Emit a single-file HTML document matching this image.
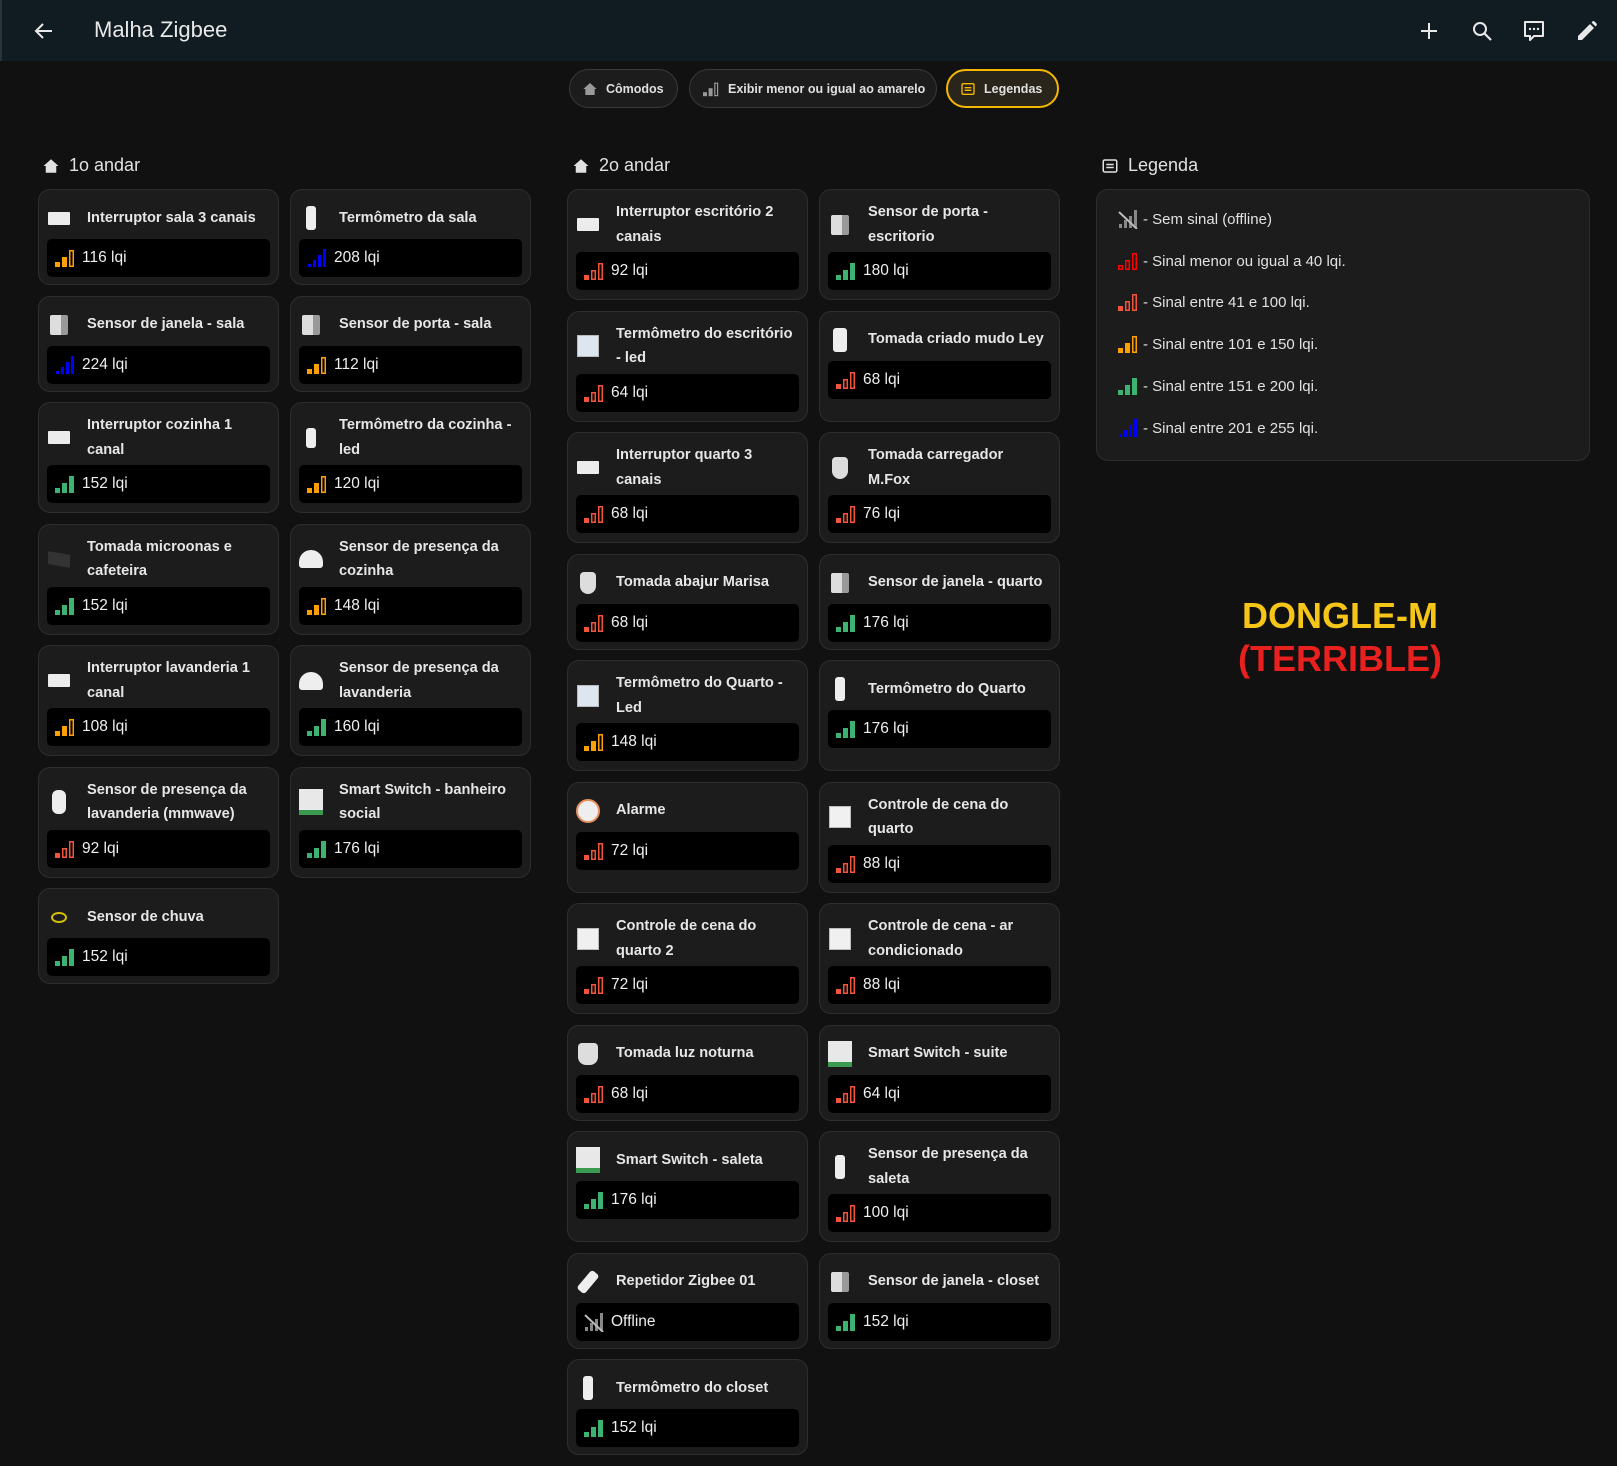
<!DOCTYPE html>
<html><head><meta charset="utf-8"><style>
*{box-sizing:border-box;margin:0;padding:0}
body{width:1617px;height:1466px;background:#111111;font-family:"Liberation Sans",sans-serif;color:#e1e1e1;position:relative;overflow:hidden}
.top{position:absolute;left:0;top:0;width:1617px;height:61px;background:#111c22;border-left:2px solid #2a3238}
.top .t{position:absolute;left:92px;top:17px;font-size:22px;color:#e8e8e8}
.hi{position:absolute;top:19px}
.chip{position:absolute;top:69px;height:39px;border:1px solid #3a3a3a;border-radius:20px;background:#1c1c1c;font-size:12.5px;font-weight:bold;color:#e0e0e0;display:flex;align-items:center;padding-left:12px}
.chip svg{margin-right:8px}
.sec{position:absolute;top:155px;font-size:18px;color:#e1e1e1;display:flex;align-items:center}
.sec svg{margin-right:9px}
.col{position:absolute;top:189px;display:grid;grid-template-columns:241px 241px;column-gap:11px;row-gap:10.5px}
.c{background:#1c1c1c;border:1px solid #2e2e2e;border-radius:12px;padding:7px 8px 8px 8px;height:96px}
.h{display:flex;align-items:center;min-height:42px;padding:3px 0}
.h .n{font-weight:bold;font-size:14.6px;line-height:24.5px;color:#e6e6e6;margin-left:16px;padding-right:3px}
.ic{width:24px;height:24px;flex:none;display:flex;align-items:center;justify-content:center}
.b{background:#000;border-radius:5px;height:38px;display:flex;align-items:center;padding-left:7px;font-size:15.5px;color:#f0f0f0}
.b svg{margin-right:6px}
.sw{width:22px;height:13px;background:#ececec;border-radius:1px}
.th{width:10px;height:24px;background:#eee;border-radius:3px}
.dr{width:18px;height:20px;background:linear-gradient(90deg,#ddd 60%,#999 60%);border-radius:2px}
.pr{width:24px;height:18px;background:#eee;border-radius:12px 12px 3px 3px}
.sq{width:22px;height:22px;background:#f0f0f0;border:1px solid #bbb}
.ss{width:26px;height:26px;background:#e8e8e8;border-bottom:5px solid #3a9a50}
.pl{width:20px;height:22px;background:#ddd;border-radius:4px 4px 8px 8px}
.lg{position:absolute;left:1096px;top:189px;width:494px;height:272px;background:#1c1c1c;border:1px solid #2e2e2e;border-radius:12px}
.lr{position:absolute;left:20px;display:flex;align-items:center;font-size:15px;color:#e1e1e1}
.lr svg{margin-right:4px}
.dg{position:absolute;left:1140px;width:400px;text-align:center;font-weight:bold;font-size:36px;line-height:42px}
</style></head><body>
<svg width="0" height="0" style="position:absolute">
<defs>
<symbol id="gr" viewBox="0 0 22 20"><rect x="1" y="14" width="5" height="5" fill="#3cb371"/><rect x="8" y="9" width="5" height="10" fill="#3cb371"/><rect x="15" y="2" width="5" height="17" fill="#3cb371"/></symbol>
<symbol id="or" viewBox="0 0 22 20"><rect x="1" y="14" width="5" height="5" fill="#ffa000"/><rect x="8" y="9" width="5" height="10" fill="#ffa000"/><rect x="15.75" y="2.75" width="3.5" height="15.5" fill="none" stroke="#ffa000" stroke-width="1.5"/></symbol>
<symbol id="gy" viewBox="0 0 22 20"><rect x="1" y="14" width="5" height="5" fill="#999"/><rect x="8" y="9" width="5" height="10" fill="#999"/><rect x="15.75" y="2.75" width="3.5" height="15.5" fill="none" stroke="#999" stroke-width="1.5"/></symbol>
<symbol id="to" viewBox="0 0 22 20"><rect x="1" y="14" width="5" height="5" fill="#f4553a"/><rect x="8.75" y="9.75" width="3.5" height="8.5" fill="none" stroke="#f4553a" stroke-width="1.5"/><rect x="15.75" y="2.75" width="3.5" height="15.5" fill="none" stroke="#f4553a" stroke-width="1.5"/></symbol>
<symbol id="re" viewBox="0 0 22 20"><rect x="1.75" y="14.75" width="3.5" height="3.5" fill="none" stroke="#f00" stroke-width="1.5"/><rect x="8.75" y="9.75" width="3.5" height="8.5" fill="none" stroke="#f00" stroke-width="1.5"/><rect x="15.75" y="2.75" width="3.5" height="15.5" fill="none" stroke="#f00" stroke-width="1.5"/></symbol>
<symbol id="bl" viewBox="0 0 22 20"><rect x="2" y="16" width="3" height="3" fill="#0000ff"/><rect x="7" y="12" width="3" height="7" fill="#0000ff"/><rect x="12" y="7" width="3" height="12" fill="#0000ff"/><rect x="17" y="1" width="3" height="18" fill="#0000ff"/></symbol>
<symbol id="of" viewBox="0 0 22 20"><rect x="2" y="15" width="3" height="4" fill="#888"/><rect x="7" y="11" width="3" height="8" fill="#888"/><rect x="12" y="7" width="3" height="12" fill="#888"/><rect x="17" y="1" width="3" height="18" fill="#888"/><path d="M2 3 L20 20" stroke="#bbb" stroke-width="2"/></symbol>
</defs></svg>

<div class="top"><div class="t">Malha Zigbee</div>
<svg class="hi" style="left:30px" width="24" height="24" viewBox="0 0 24 24"><path d="M20 12H5M11 5l-7 7 7 7" stroke="#e8e8e8" stroke-width="2" fill="none"/></svg>
<svg class="hi" style="left:1415px" width="24" height="24" viewBox="0 0 24 24"><path d="M12 4v16M4 12h16" stroke="#e8e8e8" stroke-width="2"/></svg>
<svg class="hi" style="left:1468px" width="24" height="24" viewBox="0 0 24 24"><circle cx="10" cy="10" r="6" stroke="#e8e8e8" stroke-width="2" fill="none"/><path d="M14.5 14.5L21 21" stroke="#e8e8e8" stroke-width="2.2"/></svg>
<svg class="hi" style="left:1520px" width="24" height="24" viewBox="0 0 24 24"><path d="M3 3h18v14h-9l-4 4v-4H3z" stroke="#e8e8e8" stroke-width="2" fill="none" stroke-linejoin="round"/><circle cx="8" cy="10" r="1.2" fill="#e8e8e8"/><circle cx="12" cy="10" r="1.2" fill="#e8e8e8"/><circle cx="16" cy="10" r="1.2" fill="#e8e8e8"/></svg>
<svg class="hi" style="left:1573px" width="24" height="24" viewBox="0 0 24 24"><path d="M3 21v-4L15 5l4 4L7 21z" fill="#e8e8e8"/><path d="M16.5 3.5l4 4 1-1a1.5 1.5 0 000-2l-2-2a1.5 1.5 0 00-2 0z" fill="#e8e8e8"/></svg>
</div>

<div class="chip" style="left:569px;width:109px"><svg width="16" height="16" viewBox="0 0 24 24"><path d="M12 3L2 12h3v9h14v-9h3z" fill="#999"/></svg>Cômodos</div>
<div class="chip" style="left:689px;width:248px"><svg width="18" height="16" viewBox="0 0 22 20"><use href="#gy"/></svg>Exibir menor ou igual ao amarelo</div>
<div class="chip" style="left:946px;width:113px;border:2px solid #f5b800;background:#29251b"><svg width="16" height="16" viewBox="0 0 24 24"><rect x="3" y="4" width="18" height="16" rx="2" stroke="#f5b800" stroke-width="2" fill="none"/><path d="M7 10h10M7 14h10" stroke="#f5b800" stroke-width="2"/></svg>Legendas</div>

<div class="sec" style="left:42px"><svg width="18" height="18" viewBox="0 0 24 24"><path d="M12 3L2 12h3v9h14v-9h3z" fill="#e1e1e1"/></svg>1o andar</div>
<div class="sec" style="left:572px"><svg width="18" height="18" viewBox="0 0 24 24"><path d="M12 3L2 12h3v9h14v-9h3z" fill="#e1e1e1"/></svg>2o andar</div>
<div class="sec" style="left:1101px"><svg width="18" height="18" viewBox="0 0 24 24"><rect x="3" y="4" width="18" height="16" rx="2" stroke="#e1e1e1" stroke-width="2" fill="none"/><path d="M7 10h10M7 14h10" stroke="#e1e1e1" stroke-width="2"/></svg>Legenda</div>

<div class="col" style="left:38px;grid-template-rows:96px 96px 111px 111px 111px 111px 96px">
<div class="c"><div class="h"><div class="ic"><div class="sw"></div></div><div class="n">Interruptor sala 3 canais</div></div><div class="b"><svg width="22" height="20"><use href="#or"/></svg>116 lqi</div></div>
<div class="c"><div class="h"><div class="ic"><div class="th"></div></div><div class="n">Termômetro da sala</div></div><div class="b"><svg width="22" height="20"><use href="#bl"/></svg>208 lqi</div></div>
<div class="c"><div class="h"><div class="ic"><div class="dr"></div></div><div class="n">Sensor de janela - sala</div></div><div class="b"><svg width="22" height="20"><use href="#bl"/></svg>224 lqi</div></div>
<div class="c"><div class="h"><div class="ic"><div class="dr"></div></div><div class="n">Sensor de porta - sala</div></div><div class="b"><svg width="22" height="20"><use href="#or"/></svg>112 lqi</div></div>
<div class="c" style="height:111px"><div class="h"><div class="ic"><div class="sw"></div></div><div class="n">Interruptor cozinha 1 canal</div></div><div class="b"><svg width="22" height="20"><use href="#gr"/></svg>152 lqi</div></div>
<div class="c" style="height:111px"><div class="h"><div class="ic"><div class="th" style="height:20px"></div></div><div class="n">Termômetro da cozinha - led</div></div><div class="b"><svg width="22" height="20"><use href="#or"/></svg>120 lqi</div></div>
<div class="c" style="height:111px"><div class="h"><div class="ic"><div class="sw" style="background:#333;transform:skewY(10deg)"></div></div><div class="n">Tomada microonas e cafeteira</div></div><div class="b"><svg width="22" height="20"><use href="#gr"/></svg>152 lqi</div></div>
<div class="c" style="height:111px"><div class="h"><div class="ic"><div class="pr"></div></div><div class="n">Sensor de presença da cozinha</div></div><div class="b"><svg width="22" height="20"><use href="#or"/></svg>148 lqi</div></div>
<div class="c" style="height:111px"><div class="h"><div class="ic"><div class="sw"></div></div><div class="n">Interruptor lavanderia 1 canal</div></div><div class="b"><svg width="22" height="20"><use href="#or"/></svg>108 lqi</div></div>
<div class="c" style="height:111px"><div class="h"><div class="ic"><div class="pr"></div></div><div class="n">Sensor de presença da lavanderia</div></div><div class="b"><svg width="22" height="20"><use href="#gr"/></svg>160 lqi</div></div>
<div class="c" style="height:111px"><div class="h"><div class="ic"><div class="th" style="width:14px;border-radius:6px"></div></div><div class="n">Sensor de presença da lavanderia (mmwave)</div></div><div class="b"><svg width="22" height="20"><use href="#to"/></svg>92 lqi</div></div>
<div class="c" style="height:111px"><div class="h"><div class="ic"><div class="ss"></div></div><div class="n">Smart Switch - banheiro social</div></div><div class="b"><svg width="22" height="20"><use href="#gr"/></svg>176 lqi</div></div>
<div class="c"><div class="h"><div class="ic"><div style="width:16px;height:11px;border:2px solid #d4c000;border-radius:50%"></div></div><div class="n">Sensor de chuva</div></div><div class="b"><svg width="22" height="20"><use href="#gr"/></svg>152 lqi</div></div>
</div>

<div class="col" style="left:567px;grid-template-rows:111px 111px 111px 96px 111px 111px 111px 96px 111px 96px 96px">
<div class="c" style="height:111px"><div class="h"><div class="ic"><div class="sw"></div></div><div class="n">Interruptor escritório 2 canais</div></div><div class="b"><svg width="22" height="20"><use href="#to"/></svg>92 lqi</div></div>
<div class="c" style="height:111px"><div class="h"><div class="ic"><div class="dr"></div></div><div class="n">Sensor de porta - escritorio</div></div><div class="b"><svg width="22" height="20"><use href="#gr"/></svg>180 lqi</div></div>
<div class="c" style="height:111px"><div class="h"><div class="ic"><div class="sq" style="background:#dde6ee"></div></div><div class="n">Termômetro do escritório - led</div></div><div class="b"><svg width="22" height="20"><use href="#to"/></svg>64 lqi</div></div>
<div class="c" style="height:111px"><div class="h"><div class="ic"><div class="th" style="width:14px"></div></div><div class="n">Tomada criado mudo Ley</div></div><div class="b"><svg width="22" height="20"><use href="#to"/></svg>68 lqi</div></div>
<div class="c" style="height:111px"><div class="h"><div class="ic"><div class="sw"></div></div><div class="n">Interruptor quarto 3 canais</div></div><div class="b"><svg width="22" height="20"><use href="#to"/></svg>68 lqi</div></div>
<div class="c" style="height:111px"><div class="h"><div class="ic"><div class="pl" style="width:16px"></div></div><div class="n">Tomada carregador M.Fox</div></div><div class="b"><svg width="22" height="20"><use href="#to"/></svg>76 lqi</div></div>
<div class="c"><div class="h"><div class="ic"><div class="pl" style="width:16px"></div></div><div class="n">Tomada abajur Marisa</div></div><div class="b"><svg width="22" height="20"><use href="#to"/></svg>68 lqi</div></div>
<div class="c"><div class="h"><div class="ic"><div class="dr"></div></div><div class="n">Sensor de janela - quarto</div></div><div class="b"><svg width="22" height="20"><use href="#gr"/></svg>176 lqi</div></div>
<div class="c" style="height:111px"><div class="h"><div class="ic"><div class="sq" style="background:#dde6ee"></div></div><div class="n">Termômetro do Quarto - Led</div></div><div class="b"><svg width="22" height="20"><use href="#or"/></svg>148 lqi</div></div>
<div class="c" style="height:111px"><div class="h"><div class="ic"><div class="th"></div></div><div class="n">Termômetro do Quarto</div></div><div class="b"><svg width="22" height="20"><use href="#gr"/></svg>176 lqi</div></div>
<div class="c" style="height:111px"><div class="h"><div class="ic"><div style="width:24px;height:24px;border-radius:50%;background:#eee;border:2px solid #e89060"></div></div><div class="n">Alarme</div></div><div class="b"><svg width="22" height="20"><use href="#to"/></svg>72 lqi</div></div>
<div class="c" style="height:111px"><div class="h"><div class="ic"><div class="sq"></div></div><div class="n">Controle de cena do quarto</div></div><div class="b"><svg width="22" height="20"><use href="#to"/></svg>88 lqi</div></div>
<div class="c" style="height:111px"><div class="h"><div class="ic"><div class="sq"></div></div><div class="n">Controle de cena do quarto 2</div></div><div class="b"><svg width="22" height="20"><use href="#to"/></svg>72 lqi</div></div>
<div class="c" style="height:111px"><div class="h"><div class="ic"><div class="sq"></div></div><div class="n">Controle de cena - ar condicionado</div></div><div class="b"><svg width="22" height="20"><use href="#to"/></svg>88 lqi</div></div>
<div class="c"><div class="h"><div class="ic"><div class="pl"></div></div><div class="n">Tomada luz noturna</div></div><div class="b"><svg width="22" height="20"><use href="#to"/></svg>68 lqi</div></div>
<div class="c"><div class="h"><div class="ic"><div class="ss"></div></div><div class="n">Smart Switch - suite</div></div><div class="b"><svg width="22" height="20"><use href="#to"/></svg>64 lqi</div></div>
<div class="c" style="height:111px"><div class="h"><div class="ic"><div class="ss"></div></div><div class="n">Smart Switch - saleta</div></div><div class="b"><svg width="22" height="20"><use href="#gr"/></svg>176 lqi</div></div>
<div class="c" style="height:111px"><div class="h"><div class="ic"><div class="th"></div></div><div class="n">Sensor de presença da saleta</div></div><div class="b"><svg width="22" height="20"><use href="#to"/></svg>100 lqi</div></div>
<div class="c"><div class="h"><div class="ic"><div class="th" style="transform:rotate(40deg)"></div></div><div class="n">Repetidor Zigbee 01</div></div><div class="b"><svg width="22" height="20"><use href="#of"/></svg>Offline</div></div>
<div class="c"><div class="h"><div class="ic"><div class="dr"></div></div><div class="n">Sensor de janela - closet</div></div><div class="b"><svg width="22" height="20"><use href="#gr"/></svg>152 lqi</div></div>
<div class="c"><div class="h"><div class="ic"><div class="th"></div></div><div class="n">Termômetro do closet</div></div><div class="b"><svg width="22" height="20"><use href="#gr"/></svg>152 lqi</div></div>
</div>

<div class="lg">
<div class="lr" style="top:19px"><svg width="22" height="20"><use href="#of"/></svg>- Sem sinal (offline)</div>
<div class="lr" style="top:61px"><svg width="22" height="20"><use href="#re"/></svg>- Sinal menor ou igual a 40 lqi.</div>
<div class="lr" style="top:102px"><svg width="22" height="20"><use href="#to"/></svg>- Sinal entre 41 e 100 lqi.</div>
<div class="lr" style="top:144px"><svg width="22" height="20"><use href="#or"/></svg>- Sinal entre 101 e 150 lqi.</div>
<div class="lr" style="top:186px"><svg width="22" height="20"><use href="#gr"/></svg>- Sinal entre 151 e 200 lqi.</div>
<div class="lr" style="top:228px"><svg width="22" height="20"><use href="#bl"/></svg>- Sinal entre 201 e 255 lqi.</div>
</div>

<div class="dg" style="top:595px;color:#f5c518">DONGLE-M</div>
<div class="dg" style="top:638px;color:#e8201e">(TERRIBLE)</div>
</body></html>
